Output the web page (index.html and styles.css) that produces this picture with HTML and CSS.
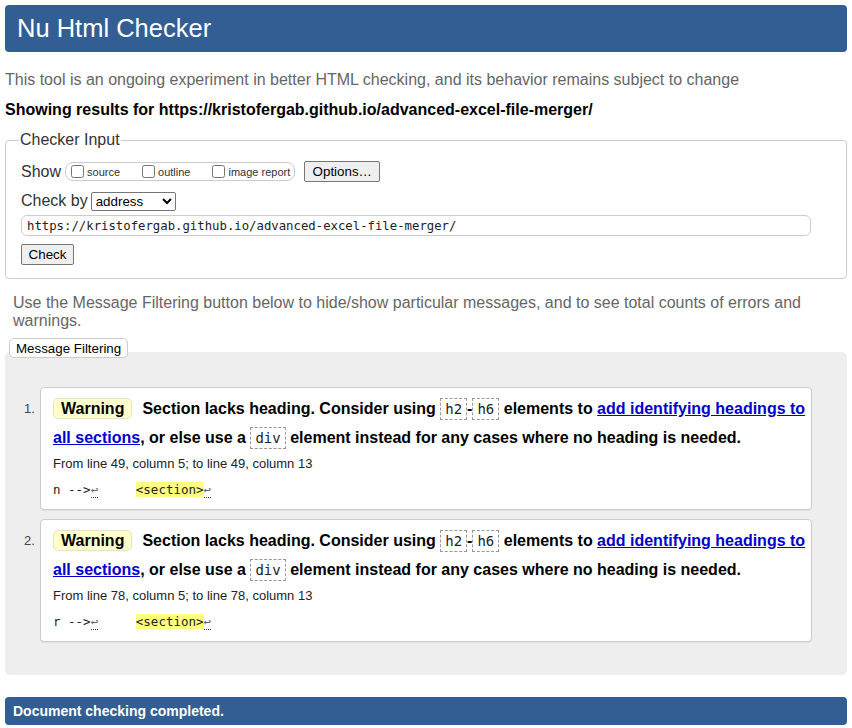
FILE: index.html
```html
<!DOCTYPE html>
<html lang="en">
<head>
<meta charset="utf-8">
<title>Nu Html Checker</title>
<link rel="stylesheet" href="styles.css">
</head>
<body>
<h1 class="title">Nu Html Checker</h1>
<p class="intro">This tool is an ongoing experiment in better HTML checking, and its behavior remains subject to change</p>
<p class="showing">Showing results for https://kristofergab.github.io/advanced-excel-file-merger/</p>

<fieldset class="input-box">
  <legend class="legend">Checker Input</legend>
  <div class="row">
    <span class="row-label">Show</span>
    <span class="opts">
      <label class="opt"><input type="checkbox" class="cb">source</label>
      <label class="opt"><input type="checkbox" class="cb">outline</label>
      <label class="opt"><input type="checkbox" class="cb">image report</label>
    </span>
    <button class="btn btn-options">Options…</button>
  </div>
  <div class="row row-check">
    <span class="row-label">Check by</span>
    <select class="sel"><option>address</option></select>
  </div>
  <input class="url" type="text" value="https://kristofergab.github.io/advanced-excel-file-merger/">
  <div class="row-btn"><button class="btn">Check</button></div>
</fieldset>

<p class="filter-note">Use the Message Filtering button below to hide/show particular messages, and to see total counts of errors and warnings.</p>
<button class="btn btn-filter">Message Filtering</button>

<div class="results">
  <div class="item">
    <span class="num">1.</span>
    <div class="card">
      <p class="msg"><span class="badge">Warning</span><span class="msg-text">Section lacks heading. Consider using <code class="c">h2</code>-<code class="c">h6</code> elements to <a href="#" class="lnk">add identifying headings to all sections</a>, or else use a <code class="c">div</code> element instead for any cases where no heading is needed.</span></p>
      <p class="loc">From line 49, column 5; to line 49, column 13</p>
      <p class="extract">n --&gt;<span class="lf">↩</span>     <span class="hl">&lt;section&gt;</span><span class="lf">↩</span></p>
    </div>
  </div>
  <div class="item">
    <span class="num">2.</span>
    <div class="card">
      <p class="msg"><span class="badge">Warning</span><span class="msg-text">Section lacks heading. Consider using <code class="c">h2</code>-<code class="c">h6</code> elements to <a href="#" class="lnk">add identifying headings to all sections</a>, or else use a <code class="c">div</code> element instead for any cases where no heading is needed.</span></p>
      <p class="loc">From line 78, column 5; to line 78, column 13</p>
      <p class="extract">r --&gt;<span class="lf">↩</span>     <span class="hl">&lt;section&gt;</span><span class="lf">↩</span></p>
    </div>
  </div>
</div>

<div class="done">Document checking completed.</div>
</body>
</html>
```

FILE: styles.css
```css
body {
  margin: 5px;
  font-family: "Liberation Sans", Arial, sans-serif;
  color: #000;
  background: #fff;
}
.title {
  margin: 0;
  height: 47px;
  background: #335e93;
  color: #fff;
  border-radius: 4px;
  font-weight: normal;
  font-size: 25.5px;
  line-height: 47px;
  padding: 0 12px;
}
.intro {
  margin: 19px 0 0;
  font-size: 16px;
  line-height: 18px;
  color: #666;
}
.showing {
  margin: 12px 0 0;
  font-size: 16px;
  line-height: 18px;
  font-weight: bold;
}
.input-box {
  margin: 12px 0 0;
  border: 1px solid #ccc;
  border-radius: 4px;
  padding: 12px 15px 13px 15px;
}
.legend {
  font-size: 16px;
  line-height: 18px;
  color: #333;
  padding: 0 1px;
  margin-left: -2px;
}
.row {
  display: flex;
  align-items: center;
  height: 21px;
}
.row-label {
  font-size: 16px;
  color: #333;
  margin-right: 4px;
  white-space: nowrap;
}
.opts {
  display: inline-flex;
  align-items: center;
  height: 17px;
  border: 1px solid #ccc;
  border-radius: 8px;
  padding: 0 4px 0 2px;
  white-space: nowrap;
}
.opt {
  display: inline-flex;
  align-items: center;
  font-size: 11px;
  color: #333;
  margin-right: 19px;
  white-space: nowrap;
}
.opt:last-child { margin-right: 0; }
.cb {
  margin: 0 3px 0 3px;
  width: 13px;
  height: 13px;
}
.btn {
  font-family: "Liberation Sans", Arial, sans-serif;
  font-size: 13.33px;
  background: #efefef;
  border: 1px solid #767676;
  border-radius: 2px;
  padding: 1px 6px;
  height: 21px;
  color: #000;
  white-space: nowrap;
}
.btn-options {
  margin-left: 9px;
  width: 76px;
}
.row-check {
  margin-top: 9px;
  height: 20px;
}
.row-check .row-label { margin-right: 3px; }
.sel {
  font-family: "Liberation Sans", Arial, sans-serif;
  font-size: 13.33px;
  width: 85px;
  height: 19px;
  border: 1px solid #767676;
  border-radius: 2px;
  background: #fff;
}
.url {
  display: block;
  margin-top: 4px;
  width: 790px;
  height: 21px;
  box-sizing: border-box;
  border: 1px solid #ccc;
  border-radius: 6px;
  font-family: "DejaVu Sans Mono", monospace;
  font-size: 12.3px;
  color: #222;
  padding: 0 5px;
}
.row-btn { margin-top: 8px; }
.row-btn .btn { width: 53px; padding: 0; }
.filter-note {
  margin: 15px 8px 0 8px;
  font-size: 16px;
  line-height: 18px;
  color: #666;
}
.btn-filter {
  display: block;
  position: relative;
  z-index: 1;
  margin: 8px 0 0 4px;
  background: #fff;
  border: 1px solid #ccc;
  border-radius: 5px;
  height: 20px;
  padding: 0 6px;
}
.results {
  margin-top: -6px;
  background: #eee;
  border-radius: 5px;
  padding: 35px 35px 33px 14px;
  display: flex;
  flex-direction: column;
  gap: 9px;
}
.item {
  display: flex;
  align-items: flex-start;
}
.num {
  width: 21px;
  flex: none;
  font-size: 13px;
  color: #444;
  padding-top: 14px;
  padding-left: 5px;
  box-sizing: border-box;
}
.card {
  flex: 1;
  background: #fff;
  border: 1px solid #ccc;
  border-radius: 4px;
  padding: 6px 1px 10px 12px;
  box-shadow: 0 1px 1px rgba(0,0,0,0.06);
}
.msg {
  margin: 0;
  font-size: 16px;
  line-height: 29px;
  font-weight: bold;
}
.badge {
  display: inline-block;
  background: #ffffcc;
  border: 1px solid #e4e4c8;
  border-radius: 5px;
  padding: 0 7px;
  line-height: 19px;
  margin-right: 10px;
}
.c {
  font-family: "DejaVu Sans Mono", monospace;
  font-weight: normal;
  font-size: 14px;
  line-height: 17px;
  padding: 2px 4px;
  border: 1px dashed #999;
  color: #222;
}
.lnk {
  color: #0000cc;
  text-decoration: underline;
}
.loc {
  margin: 3px 0 0;
  font-size: 13px;
  line-height: 18px;
  color: #222;
}
.extract {
  margin: 8px 0 0;
  font-family: "DejaVu Sans Mono", monospace;
  font-size: 12.5px;
  line-height: 18px;
  white-space: pre;
  color: #222;
}
.hl { background: #ffff80; }
.lf {
  color: #666;
  border-bottom: 1px dotted #333;
}
.done {
  margin-top: 22px;
  background: #335e93;
  color: #fff;
  font-weight: bold;
  font-size: 14px;
  line-height: 28px;
  height: 28px;
  border-radius: 4px;
  padding: 0 8px;
}
```
